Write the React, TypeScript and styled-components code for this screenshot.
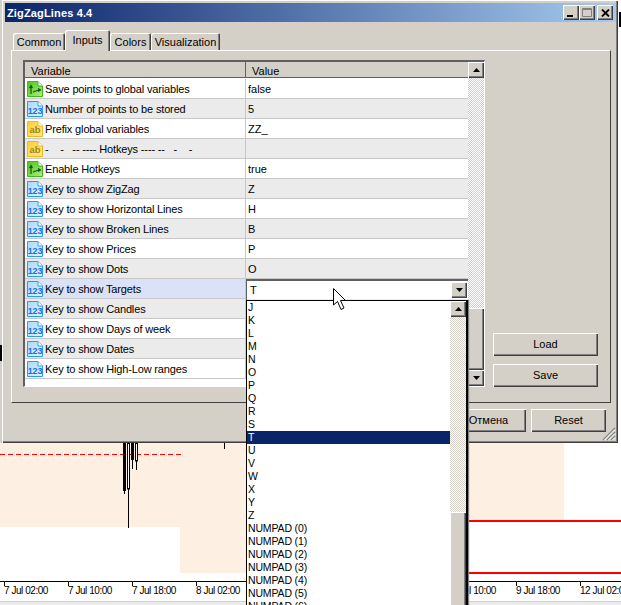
import React from 'react';
import styled, { createGlobalStyle } from 'styled-components';

const GlobalStyle = createGlobalStyle`
  html, body {
    margin: 0;
    padding: 0;
    background: #fff;
  }
  * {
    box-sizing: border-box;
  }
`;

const FONT = `'Liberation Sans', Arial, sans-serif`;
const FACE = '#d4d0c8';
const raised = `
  background: ${FACE};
  box-shadow: inset 1px 1px 0 #fff, inset -1px -1px 0 #404040, inset -2px -2px 0 #808080;
`;
const dither = `
  background: repeating-conic-gradient(#d4d0c8 0 25%, #fff 0 50%) 0 0 / 2px 2px;
`;

const Desktop = styled.div`
  position: relative;
  width: 621px;
  height: 605px;
  overflow: hidden;
  background: #fff;
  font: 11px ${FONT};
  color: #000;
`;

const ChartSvg = styled.svg`
  position: absolute;
  left: 0;
  top: 0;
  text {
    font: 10px ${FONT};
    letter-spacing: -0.45px;
    fill: #000;
  }
`;

const Window = styled.div`
  position: absolute;
  left: 2px;
  top: 0;
  width: 616px;
  height: 443px;
  padding: 3px 2px 0 3px;
  display: flex;
  flex-direction: column;
  background: ${FACE};
  box-shadow: inset 1px 1px 0 #fff, inset -1px -1px 0 #404040, inset -2px -2px 0 #808080;
`;

const TitleBar = styled.div`
  flex: none;
  height: 19px;
  display: flex;
  align-items: center;
  padding: 0 3px 0 2px;
  background: linear-gradient(90deg, #0a246a, #a6caf0);
`;

const Title = styled.div`
  flex: 1;
  color: #fff;
  font: bold 11px ${FONT};
  letter-spacing: 0.15px;
`;

const CapButton = styled.div<{ $gap?: number }>`
  ${raised}
  width: 16px;
  height: 15px;
  margin-left: ${(p) => p.$gap ?? 0}px;
  display: flex;
  align-items: center;
  justify-content: center;
`;

const TabStrip = styled.div`
  flex: none;
  position: relative;
  z-index: 1;
  height: 20px;
  margin: 8px 0 0 8px;
  display: flex;
  align-items: flex-end;
`;

const Tab = styled.div<{ $w: number; $active?: boolean }>`
  width: ${(p) => p.$w}px;
  height: ${(p) => (p.$active ? 21 : 17)}px;
  margin-bottom: ${(p) => (p.$active ? -1 : 0)}px;
  padding-top: ${(p) => (p.$active ? 4 : 3)}px;
  text-align: center;
  font-size: 11px;
  background: ${FACE};
  border-radius: 2px 2px 0 0;
  box-shadow: inset 1px 1px 0 #fff, inset -1px 0 0 #404040, inset -2px 0 0 #808080;
`;

const Panel = styled.div`
  flex: none;
  width: 600px;
  height: 353px;
  margin-left: 6px;
  padding: 9px 12px 15px 11px;
  display: flex;
  background: ${FACE};
  border-top: 1px solid #fff;
  border-left: 1px solid #fff;
  border-right: 1px solid #404040;
  border-bottom: 1px solid #404040;
`;

const GridFrame = styled.div`
  flex: none;
  width: 462px;
  height: 100%;
  display: flex;
  border-top: 2px solid #606060;
  border-left: 2px solid #606060;
  border-right: 1px solid #fff;
  border-bottom: 1px solid #fff;
`;

const Table = styled.div`
  width: 443px;
  display: flex;
  flex-direction: column;
  background: #fff;
`;

const HeaderRow = styled.div`
  flex: none;
  height: 16px;
  display: flex;
  background: ${FACE};
  border-bottom: 1px solid #606060;
  margin-bottom: 1px;
`;

const HeaderCell = styled.div<{ $w?: number }>`
  width: ${(p) => (p.$w ? `${p.$w}px` : 'auto')};
  flex: ${(p) => (p.$w ? 'none' : 1)};
  padding: 3px 0 0 6px;
  font-size: 11px;
  line-height: 12px;
  border-right: ${(p) => (p.$w ? '1px solid #606060' : 'none')};
`;

const Row = styled.div<{ $bg: string }>`
  flex: none;
  height: 20px;
  display: flex;
  background: ${(p) => p.$bg};
  border-bottom: 1px solid #c8c8c8;
`;

const NameCell = styled.div`
  flex: none;
  width: 221px;
  display: flex;
  align-items: center;
  gap: 2px;
  padding-left: 2px;
  border-right: 1px solid #c8c8c8;
  white-space: pre;
  font-size: 11px;
  letter-spacing: -0.15px;
`;

const ValueCell = styled.div`
  flex: 1;
  display: flex;
  align-items: center;
  padding-left: 2px;
  font-size: 11px;
`;

const ScrollBar = styled.div`
  flex: none;
  width: 16px;
  display: flex;
  flex-direction: column;
  ${dither}
`;

const ArrowButton = styled.div`
  ${raised}
  flex: none;
  width: 16px;
  height: 16px;
  display: flex;
  align-items: center;
  justify-content: center;
`;

const Thumb = styled.div<{ $top: number; $h: number }>`
  ${raised}
  flex: none;
  width: 16px;
  height: ${(p) => p.$h}px;
  margin-top: ${(p) => p.$top}px;
`;

const TrackGap = styled.div`
  flex: 1;
`;

const SideColumn = styled.div`
  flex: none;
  width: 105px;
  margin-left: 8px;
  display: flex;
  flex-direction: column;
  justify-content: flex-end;
  gap: 8px;
`;

const Button = styled.div<{ $w?: number }>`
  ${raised}
  flex: none;
  width: ${(p) => (p.$w ? `${p.$w}px` : '100%')};
  height: 23px;
  padding-bottom: 2px;
  display: flex;
  align-items: center;
  justify-content: center;
  font-size: 11px;
`;

const Footer = styled.div`
  flex: none;
  margin-top: 6px;
  padding-right: 10px;
  display: flex;
  justify-content: flex-end;
  gap: 5px;
`;

const Grip = styled.svg`
  position: absolute;
  right: 2px;
  bottom: 2px;
`;

const ComboOverlay = styled.div`
  position: absolute;
  left: 246px;
  top: 279px;
  width: 222px;
  height: 326px;
  display: flex;
  flex-direction: column;
`;

const ComboBox = styled.div`
  flex: none;
  height: 21px;
  display: flex;
  align-items: center;
  justify-content: space-between;
  padding: 0 1px 2px 3px;
  background: #fff;
  border-top: 2px solid #606060;
  border-left: 1px solid #606060;
  font-size: 11px;
`;

const DropList = styled.div`
  flex: 1;
  min-height: 0;
  display: flex;
  background: #fff;
  border-top: 1px solid #000;
  border-left: 1px solid #000;
  border-right: 2px solid #000;
  box-shadow: 1px 0 1px #808080;
`;

const Options = styled.div`
  flex: 1;
  overflow: hidden;
`;

const Option = styled.div<{ $selected?: boolean }>`
  height: 13px;
  line-height: 13px;
  padding-left: 1px;
  font-size: 10.5px;
  letter-spacing: -0.15px;
  white-space: pre;
  color: ${(p) => (p.$selected ? '#fff' : '#000')};
  background: ${(p) => (p.$selected ? '#0a246a' : 'transparent')};
`;

const Pointer = styled.svg`
  position: absolute;
  left: 333px;
  top: 288px;
`;

type Kind = 'bool' | 'num' | 'str';

const ICONS: Record<Kind, { from: string; to: string; edge: string }> = {
  bool: { from: '#4cc41c', to: '#b4ec84', edge: '#3fb818' },
  num: { from: '#a8d8ff', to: '#e4f4ff', edge: '#2a9cf0' },
  str: { from: '#ffcf30', to: '#ffeb90', edge: '#f0b820' },
};

const TypeIcon = ({ kind }: { kind: Kind }) => {
  const c = ICONS[kind];
  return (
    <svg width="16" height="17" viewBox="0 0 16 17" style={{ flex: 'none' }}>
      <defs>
        <linearGradient id={`fill-${kind}`} x1="0" y1="0" x2="1" y2="1">
          <stop offset="0" stopColor={c.from} />
          <stop offset="1" stopColor={c.to} />
        </linearGradient>
      </defs>
      <path d="M0.5 1.5H11L15.5 6V16.5H0.5Z" fill={`url(#fill-${kind})`} stroke={c.edge} />
      <path d="M11 1.5V6H15.5" fill="#fff" stroke={c.edge} />
      {kind === 'bool' && (
        <path d="M4 14V6M2.5 8L4 5.5 5.5 8M6 12L10 10.5 13 10M11 8.5L13.5 10 11 11.5" fill="none" stroke="#0d5c10" strokeWidth="1.2" />
      )}
      {kind === 'num' && (
        <text x="8" y="13.5" textAnchor="middle" fontFamily="'Liberation Sans', sans-serif" fontWeight="bold" fontSize="9" fill="#1a6fe0">
          123
        </text>
      )}
      {kind === 'str' && (
        <text x="8" y="13" textAnchor="middle" fontFamily="'Liberation Sans', sans-serif" fontWeight="bold" fontSize="9.5" fill="#a88414">
          ab
        </text>
      )}
    </svg>
  );
};

const UpArrow = () => (
  <svg width="7" height="4" viewBox="0 0 7 4">
    <path d="M3.5 0L7 4H0Z" fill="#000" />
  </svg>
);

const DownArrow = () => (
  <svg width="7" height="4" viewBox="0 0 7 4">
    <path d="M0 0H7L3.5 4Z" fill="#000" />
  </svg>
);

const rows: { kind: Kind; name: string; value: string }[] = [
  { kind: 'bool', name: 'Save points to global variables', value: 'false' },
  { kind: 'num', name: 'Number of points to be stored', value: '5' },
  { kind: 'str', name: 'Prefix global variables', value: 'ZZ_' },
  { kind: 'str', name: '-    -   -- ---- Hotkeys ---- --   -    -', value: '' },
  { kind: 'bool', name: 'Enable Hotkeys', value: 'true' },
  { kind: 'num', name: 'Key to show ZigZag', value: 'Z' },
  { kind: 'num', name: 'Key to show Horizontal Lines', value: 'H' },
  { kind: 'num', name: 'Key to show Broken Lines', value: 'B' },
  { kind: 'num', name: 'Key to show Prices', value: 'P' },
  { kind: 'num', name: 'Key to show Dots', value: 'O' },
  { kind: 'num', name: 'Key to show Targets', value: '' },
  { kind: 'num', name: 'Key to show Candles', value: '' },
  { kind: 'num', name: 'Key to show Days of week', value: '' },
  { kind: 'num', name: 'Key to show Dates', value: '' },
  { kind: 'num', name: 'Key to show High-Low ranges', value: '' },
];

const options = [
  ...'JKLMNOPQRSTUVWXYZ'.split(''),
  ...[0, 1, 2, 3, 4, 5, 6].map((n) => `NUMPAD (${n})`),
];

const rowColor = (i: number) => {
  if (i === 10) return '#d9e2f8';
  return i % 2 === 0 ? '#ffffff' : '#ebebeb';
};

const ticks = [4, 68, 132, 196, 516, 580];
const labels = [
  { x: 4, t: '7 Jul 02:00' },
  { x: 68, t: '7 Jul 10:00' },
  { x: 132, t: '7 Jul 18:00' },
  { x: 196, t: '8 Jul 02:00' },
  { x: 452, t: '9 Jul 10:00' },
  { x: 516, t: '9 Jul 18:00' },
  { x: 580, t: '12 Jul 02:00' },
];

const Chart = () => (
  <ChartSvg width="621" height="605" viewBox="0 0 621 605">
    <rect x="0" y="0" width="2" height="443" fill={FACE} />
    <rect x="0" y="443" width="180" height="84" fill="#fdf0e3" />
    <rect x="180" y="443" width="70" height="130" fill="#fdf0e3" />
    <rect x="468" y="443" width="96" height="78" fill="#fdf0e3" />
    <rect x="0" y="345" width="2" height="16" fill="#000" />
    <rect x="619" y="12" width="2" height="15" fill="#000" />
    <path d="M0 454.5H183" stroke="#f00" strokeDasharray="5 3" />
    <rect x="468" y="520" width="153" height="2" fill="#f00" />
    <rect x="468" y="572" width="153" height="2" fill="#f00" />
    <rect x="123" y="443" width="3" height="48" fill="#000" />
    <path d="M124.5 490V494M128.5 489V528M132.5 459V469" stroke="#000" fill="none" />
    <rect x="127.5" y="443" width="2" height="46" fill="#fff" stroke="#000" />
    <rect x="131" y="443" width="3" height="17" fill="#000" />
    <rect x="135.5" y="443" width="2" height="18" fill="#fff" stroke="#000" />
    <path d="M136.5 461V470M224.5 443V449" stroke="#000" />
    <path d="M0 581.5H621" stroke="#000" />
    {ticks.map((x) => (
      <path key={x} d={`M${x + 0.5} 581V586`} stroke="#000" />
    ))}
    {labels.map((l) => (
      <text key={l.x} x={l.x} y="594">
        {l.t}
      </text>
    ))}
    <rect x="0" y="601" width="621" height="4" fill="#ececec" />
    <rect x="0" y="601" width="621" height="1" fill={FACE} />
  </ChartSvg>
);

const App = () => (
  <Desktop>
    <GlobalStyle />
    <Chart />
    <Window>
      <TitleBar>
        <Title>ZigZagLines 4.4</Title>
        <CapButton>
          <svg width="8" height="8" viewBox="0 0 8 8">
            <rect x="0" y="6" width="6" height="2" fill="#000" />
          </svg>
        </CapButton>
        <CapButton>
          <svg width="10" height="9" viewBox="0 0 10 9">
            <path d="M0.5 0.5H9.5V8.5H0.5Z" fill="none" stroke="#808080" />
            <path d="M0 1.5H10" stroke="#808080" />
          </svg>
        </CapButton>
        <CapButton $gap={2}>
          <svg width="9" height="8" viewBox="0 0 9 8">
            <path d="M1 0.5L8 7.5M8 0.5L1 7.5" stroke="#000" strokeWidth="1.8" />
          </svg>
        </CapButton>
      </TitleBar>
      <TabStrip>
        <Tab $w={52}>Common</Tab>
        <Tab $w={45} $active>
          Inputs
        </Tab>
        <Tab $w={41}>Colors</Tab>
        <Tab $w={69}>Visualization</Tab>
      </TabStrip>
      <Panel>
        <GridFrame>
          <Table>
            <HeaderRow>
              <HeaderCell $w={221}>Variable</HeaderCell>
              <HeaderCell>Value</HeaderCell>
            </HeaderRow>
            {rows.map((r, i) => (
              <Row key={r.name} $bg={rowColor(i)}>
                <NameCell>
                  <TypeIcon kind={r.kind} />
                  {r.name}
                </NameCell>
                <ValueCell>{r.value}</ValueCell>
              </Row>
            ))}
          </Table>
          <ScrollBar>
            <ArrowButton>
              <UpArrow />
            </ArrowButton>
            <Thumb $top={230} $h={62} />
            <TrackGap />
            <ArrowButton>
              <DownArrow />
            </ArrowButton>
          </ScrollBar>
        </GridFrame>
        <SideColumn>
          <Button>Load</Button>
          <Button>Save</Button>
        </SideColumn>
      </Panel>
      <Footer>
        <Button $w={75}>Отмена</Button>
        <Button $w={75}>Reset</Button>
      </Footer>
      <Grip width="14" height="14" viewBox="0 0 14 14">
        <path d="M13 1L1 13M13 5L5 13M13 9L9 13" stroke="#808080" strokeWidth="1.2" fill="none" />
        <path d="M13 2.5L2.5 13M13 6.5L6.5 13M13 10.5L10.5 13" stroke="#fff" fill="none" />
      </Grip>
    </Window>
    <ComboOverlay>
      <ComboBox>
        T
        <ArrowButton>
          <DownArrow />
        </ArrowButton>
      </ComboBox>
      <DropList>
        <Options>
          {options.map((o) => (
            <Option key={o} $selected={o === 'T'}>
              {o}
            </Option>
          ))}
        </Options>
        <ScrollBar>
          <ArrowButton>
            <UpArrow />
          </ArrowButton>
          <Thumb $top={195} $h={120} />
        </ScrollBar>
      </DropList>
    </ComboOverlay>
    <Pointer width="13" height="23" viewBox="0 0 13 23">
      <path d="M0.5 0.5V17L4.5 13.5L8 21.5L11 20L7.5 12.5H12.5Z" fill="#fff" stroke="#000" />
    </Pointer>
  </Desktop>
);

export default App;
